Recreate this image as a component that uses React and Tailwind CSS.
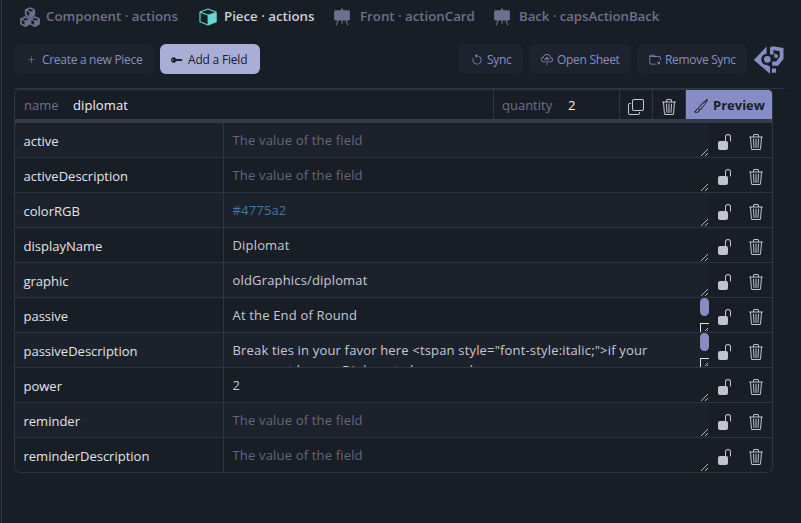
import { BsPlusLg, BsKeyFill, BsArrowCounterclockwise, BsCloudUpload, BsFolderX, BsCopy, BsTrash3, BsBrush, BsUnlockFill, BsEaselFill } from "react-icons/bs";

const rows = [
  { name: "active" },
  { name: "activeDescription" },
  { name: "colorRGB", value: "#4775a2", color: "text-[#4775a2]" },
  { name: "displayName", value: "Diplomat" },
  { name: "graphic", value: "oldGraphics/diplomat" },
  { name: "passive", value: "At the End of Round", scroll: true },
  {
    name: "passiveDescription",
    value: 'Break ties in your favor here <tspan style="font-style:italic;">if your\nopponent has no Diplomat also scored',
    scroll: true,
  },
  { name: "power", value: "2" },
  { name: "reminder" },
  { name: "reminderDescription" },
];

function Cubes() {
  const cube = (x, y) => (
    <g transform={`translate(${x} ${y})`}>
      <path d="M5.2 1 9.5 3v4.8L5.2 10.2.9 7.8V3Z" fill="none" stroke="currentColor" strokeWidth="1.7" strokeLinejoin="round" />
      <path d="M5.2 5 9.5 3v4.8L5.2 10.2Z" fill="currentColor" />
      <path d="M.9 3 5.2 5v5" fill="none" stroke="currentColor" strokeWidth="1.3" />
    </g>
  );
  return (
    <svg width="20" height="20" viewBox="0 0 20 20" className="shrink-0">
      {cube(4.8, 0)}
      {cube(0, 9)}
      {cube(9.6, 9)}
    </svg>
  );
}

function Cube() {
  return (
    <svg width="18" height="18" viewBox="0 0 18 18" className="shrink-0 text-[#65d5d3]">
      <path d="M9 1 17 4v9.8L9 17 1 13.8V4Z" fill="none" stroke="currentColor" strokeWidth="1.2" strokeLinejoin="round" />
      <path d="M8.6 6.8 17.4 4v10L8.6 17.2Z" fill="currentColor" />
      <path d="M1 4.2 9 7" stroke="currentColor" strokeWidth="1.2" />
    </svg>
  );
}

function Mark() {
  return (
    <svg width="32" height="30" viewBox="0 0 32 30" className="shrink-0 text-[#878dc4]">
      <path d="M13.6 2.5 .8 16 17 29.8V22.5L14 21A5.6 5.6 0 0 1 13.6 9.8Z" fill="currentColor" />
      <circle cx="14.4" cy="15.4" r="3.3" fill="currentColor" />
      <path d="M17 3.5 20 2.2 30.5 4V15L25 21.8H19.2V17.5H23L26.7 13V7.2L20.5 6V10.5H17Z" fill="currentColor" />
      <path d="M21.3 9.2 24.8 11v2.8H21.3z" fill="currentColor" />
      <path d="M18.8 24.5h4.2v4.2h-4.2z" fill="currentColor" />
    </svg>
  );
}

function Grip({ boxed }) {
  return (
    <svg width="9" height="9" viewBox="0 0 9 9" className="absolute right-0 bottom-0" shapeRendering="crispEdges">
      {boxed && <path d="M0 0h9v1H1v8H0z" fill="#dedede" />}
      {boxed ? (
        <path d="M5 7h1v1H5zM6 6h1v1H6zM7 5h1v1H7zM7 7h1v1H7z" fill="#b5b5b5" />
      ) : (
        <path d="M1 7h1v1H1zM2 6h1v1H2zM3 5h1v1H3zM4 4h1v1H4zM5 3h1v1H5zM6 2h1v1H6zM7 1h1v1H7zM5 7h1v1H5zM6 6h1v1H6zM7 5h1v1H7z" fill="#b5b5b5" />
      )}
    </svg>
  );
}

export default function App() {
  return (
    <div className="h-[523px] w-[801px] overflow-hidden bg-[#181e25] pl-px font-['Open_Sans',sans-serif] text-[13px] whitespace-nowrap text-[#c8c8d4]">
      <div className="h-full border-l border-[#2c3643] pl-[12px]">
        <nav className="flex h-[34px] items-center pl-[6px] text-[13.3px] font-semibold tracking-[-0.02px] text-[#706f8e]">
          <div className="flex w-[179px] items-center gap-[6px]"><Cubes /><span>Component · actions</span></div>
          <div className="flex w-[134px] items-center gap-[7px] text-[#d0d0da]"><Cube /><span>Piece · actions</span></div>
          <div className="flex w-[160px] items-center gap-[9px]"><BsEaselFill size={18} /><span>Front · actionCard</span></div>
          <div className="flex items-center gap-[8px] tracking-[-0.08px]"><BsEaselFill size={18} /><span>Back · capsActionBack</span></div>
        </nav>

        <div className="mt-[10px] flex h-[30px] items-center gap-[6px] text-[12px] tracking-[-0.3px] text-[#878dc4]">
          <button className="flex h-[30px] w-[140px] items-center gap-[6px] rounded-md bg-[#1d232c] pt-px pl-[13px]"><BsPlusLg size={9} /><span>Create a new Piece</span></button>
          <button className="flex h-[30px] w-[100px] items-center gap-[5px] rounded-md bg-[#a9aed6] pt-px pl-[11px] tracking-[-0.2px] text-[#181e25]"><BsKeyFill size={12} /><span>Add a Field</span></button>
          <div className="w-[187px]" />
          <button className="flex h-[30px] w-[64px] items-center gap-[4px] rounded-md bg-[#1d232c] pt-px pl-[12px]"><BsArrowCounterclockwise size={12} /><span>Sync</span></button>
          <button className="flex h-[30px] w-[102px] items-center gap-[4px] rounded-md bg-[#1d232c] pt-px pl-[12px]"><BsCloudUpload size={12} /><span>Open Sheet</span></button>
          <button className="flex h-[30px] w-[110px] items-center gap-[4px] rounded-md bg-[#1d232c] pt-px pl-[12px]"><BsFolderX size={12} /><span>Remove Sync</span></button>
          <Mark />
        </div>

        <div className="mt-[14px] h-px w-[771px] bg-[#2c3643]" />
        <div className="w-[759px] rounded-md border border-[#2c3643]">
          <div className="flex h-[29px]">
            <div className="flex w-[479px] items-center border-r border-[#2c3643] pt-[2px] pl-[9px]">
              <span className="w-[49px] text-[#706f8e]">name</span>
              <span className="tracking-[0.1px] text-[#f0f0f4]">diplomat</span>
            </div>
            <div className="flex w-[126px] items-center border-r border-[#2c3643] pt-[2px] pl-[8px]">
              <span className="w-[66px] text-[#706f8e]">quantity</span>
              <span className="text-[#f0f0f4]">2</span>
            </div>
            <div className="flex w-[33px] items-center justify-center border-r border-[#2c3643] pt-[4px]"><BsCopy size={16} /></div>
            <div className="flex w-[33px] items-center justify-center border-r border-[#2c3643] pt-[4px]"><BsTrash3 size={16} /></div>
            <div className="flex w-[86px] items-center gap-[5px] rounded-tr bg-[#878dc4] pt-[2px] pl-[8px] font-bold text-[#181e25]"><BsBrush size={14} /><span>Preview</span></div>
          </div>
          <div className="h-[4px] bg-[#323c4b]" />
          {rows.map((row, i) => (
            <div key={row.name} className={`flex ${i < 9 ? "h-[35px] border-b border-[#2c3643]" : "h-[34px]"}`}>
              <div className={`flex w-[209px] items-center border-r border-[#2c3643] pt-[3px] pl-[8.5px] text-[#e3e3e8] ${i % 2 ? "" : "bg-[#1c222b]"}`}>{row.name}</div>
              <div className={`relative w-[485px] overflow-hidden pt-[7px] pl-[8.5px] leading-[20px] tracking-[0.17px] whitespace-pre ${i % 2 ? "" : "bg-[#1c222b]"} ${row.value ? row.color || "text-[#c8c8d4]" : "text-[#66657f]"}`}>
                {row.value || "The value of the field"}
                {row.scroll && <div className="absolute top-0 right-0 h-[18px] w-[9px] rounded-full bg-[#878dc4]" />}
                <Grip boxed={row.scroll} />
              </div>
              <div className="flex flex-1 items-center pt-[4px] pl-[8px] text-[#c2c2d0]">
                <BsUnlockFill size={16} />
                <BsTrash3 size={16} className="ml-[15px]" />
              </div>
            </div>
          ))}
        </div>
      </div>
    </div>
  );
}
